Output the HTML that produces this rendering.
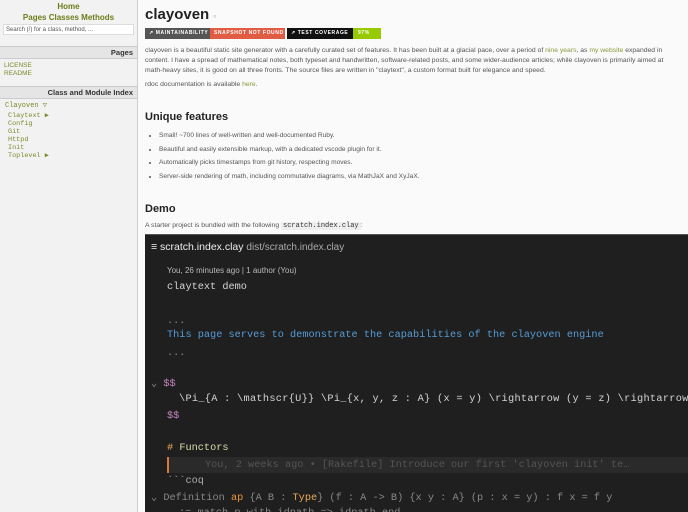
<!DOCTYPE html>
<html><head><meta charset="utf-8"><style>
*{margin:0;padding:0;box-sizing:border-box}
html,body{width:688px;height:512px}
body{overflow:hidden;background:#fafafa;font-family:"Liberation Sans",sans-serif;position:relative}
#side{position:absolute;left:0;top:0;width:138px;height:512px;background:#f2f2f2;border-right:1px solid #ccc}
.g{color:#6b7d1a;font-weight:bold;font-size:8px;text-align:center}
.sh{background:#e5e5e5;border-top:1px solid #ccc;border-bottom:1px solid #ccc;font-weight:bold;font-size:7.5px;text-align:right;padding:1px 4px;color:#333}
.lk{color:#7a8a2a;font-size:6.5px}
.mono{font-family:"Liberation Mono",monospace}
#main{position:absolute;left:145px;top:0;right:0}
h1{font-size:15px;position:absolute;top:6px;left:0;color:#222}
p{font-size:6.8px;color:#555;line-height:10px}
a{color:#8a9a3a;text-decoration:none}
h2{font-size:11px;color:#222;position:absolute;left:0}
li{font-size:6.6px;color:#555;line-height:13.5px;list-style:disc}
#code{position:absolute;left:145px;top:234px;width:543px;height:278px;background:#1f1f1f;border-top:1px solid #555;color:#ccc;overflow:hidden}
.cl{position:absolute;left:22px;font-family:"Liberation Mono",monospace;font-size:10.25px;white-space:pre;color:#d4d4d4}
</style></head><body>
<div id="side">
<div class="g" style="margin-top:2px;font-size:8px">Home</div>
<div class="g" style="margin-top:2px">Pages Classes Methods</div>
<div style="margin:2px 3px;background:#fff;height:11px;font-size:6px;color:#555;padding:2px 2px;border:1px solid #ddd">Search (/) for a class, method, ...</div>
<div class="sh" style="margin-top:11px">Pages</div>
<div class="lk" style="padding:3px 4px 0;line-height:8px">LICENSE<br>README</div>
<div class="sh" style="margin-top:8px">Class and Module Index</div>
<div class="mono lk" style="padding:2px 5px 0;font-size:7px">Clayoven ▽</div>
<div class="mono lk" style="padding:2px 8px 0;font-size:6.8px;line-height:8px">Claytext ▶<br>Config<br>Git<br>Httpd<br>Init<br>Toplevel ▶</div>
</div>
<div id="main">
<h1>clayoven <span style="font-size:8px;color:#999">▫</span></h1>
<div style="position:absolute;top:28px;left:0;height:11px;font-size:5px;font-weight:bold;letter-spacing:.6px;color:#fff;display:flex;line-height:11px">
<span style="background:#555;width:65px;padding-left:4px">↗ MAINTAINABILITY</span>
<span style="background:#e05d44;width:75px;padding-left:4px">SNAPSHOT NOT FOUND</span>
<span style="width:2px"></span>
<span style="background:#111;width:66px;padding-left:4px">↗ TEST COVERAGE</span>
<span style="background:#97ca00;width:28px;padding-left:5px">97%</span></div>
<p style="position:absolute;top:46px;left:0;width:525px">clayoven is a beautiful static site generator with a carefully curated set of features. It has been built at a glacial pace, over a period of <a>nine years</a>, as <a>my website</a> expanded in content. I have a spread of mathematical notes, both typeset and handwritten, software-related posts, and some wider-audience articles; while clayoven is primarily aimed at math-heavy sites, it is good on all three fronts. The source files are written in "claytext", a custom format built for elegance and speed.</p>
<p style="position:absolute;top:80px;left:0">rdoc documentation is available <a>here</a>.</p>
<h2 style="top:111px">Unique features</h2>
<ul style="position:absolute;top:129px;left:14px">
<li>Small! ~700 lines of well-written and well-documented Ruby.</li>
<li>Beautiful and easily extensible markup, with a dedicated vscode plugin for it.</li>
<li>Automatically picks timestamps from git history, respecting moves.</li>
<li>Server-side rendering of math, including commutative diagrams, via MathJaX and XyJaX.</li></ul>
<h2 style="top:203px">Demo</h2>
<p style="position:absolute;top:221px;left:0">A starter project is bundled with the following <span class="mono" style="background:#eee;font-size:7px;color:#333;padding:0 2px">scratch.index.clay</span>:</p>
</div>
<div id="code">
<div style="position:absolute;left:6px;top:6px;font-size:10.5px;color:#eee;white-space:nowrap">≡ scratch.index.clay <span style="color:#aaa;font-size:10px">dist/scratch.index.clay</span></div>
<div style="position:absolute;left:22px;top:31px;font-size:8px;color:#bbb">You, 26 minutes ago | 1 author (You)</div>
<div class="cl" style="top:46px">claytext demo</div>
<div class="cl" style="top:80px;color:#888">...</div>
<div class="cl" style="top:94px;color:#569cd6">This page serves to demonstrate the capabilities of the clayoven engine</div>
<div class="cl" style="top:112px;color:#888">...</div>
<div class="cl" style="left:6px;top:142px;color:#888">⌄ <span style="color:#c586c0">$$</span></div>
<div class="cl" style="left:34px;top:158px;letter-spacing:0.3px">\Pi_{A : \mathscr{U}} \Pi_{x, y, z : A} (x = y) \rightarrow (y = z) \rightarrow</div>
<div class="cl" style="top:175px;color:#c586c0">$$</div>
<div class="cl" style="top:207px;color:#dcdcaa"><span style="color:#e8ab53"># </span>Functors</div>
<div style="position:absolute;left:22px;right:0;top:222px;height:16px;background:#2a2a2a;border-left:2px solid #d7783c"></div>
<div class="cl" style="left:60px;top:224px;color:#555">You, 2 weeks ago • [Rakefile] Introduce our first 'clayoven init' te…</div>
<div class="cl" style="top:240px;color:#aaa">&#96;&#96;&#96;coq</div>
<div class="cl" style="left:6px;top:256px;color:#888">⌄ Definition <span style="color:#e8943a">ap</span> {A B : <span style="color:#e8ab53">Type</span>} (f : A -&gt; B) {x y : A} (p : x = y) : f x = f y</div>
<div class="cl" style="left:34px;top:272px;color:#888">:= match p with idpath =&gt; idpath end</div>
</div>
</body></html>
